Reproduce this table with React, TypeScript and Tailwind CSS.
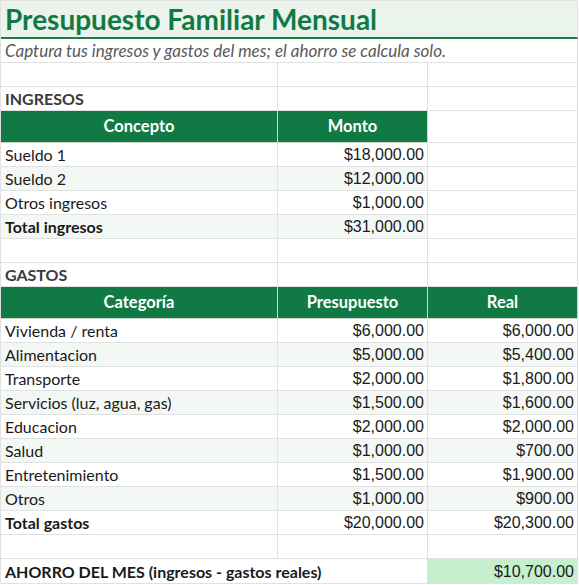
import React from 'react';

const ingresos = [
  { concepto: 'Sueldo 1', monto: '$18,000.00' },
  { concepto: 'Sueldo 2', monto: '$12,000.00' },
  { concepto: 'Otros ingresos', monto: '$1,000.00' },
];

const gastos = [
  { cat: 'Vivienda / renta', pres: '$6,000.00', real: '$6,000.00' },
  { cat: 'Alimentacion', pres: '$5,000.00', real: '$5,400.00' },
  { cat: 'Transporte', pres: '$2,000.00', real: '$1,800.00' },
  { cat: 'Servicios (luz, agua, gas)', pres: '$1,500.00', real: '$1,600.00' },
  { cat: 'Educacion', pres: '$2,000.00', real: '$2,000.00' },
  { cat: 'Salud', pres: '$1,000.00', real: '$700.00' },
  { cat: 'Entretenimiento', pres: '$1,500.00', real: '$1,900.00' },
  { cat: 'Otros', pres: '$1,000.00', real: '$900.00' },
];

const label = "font-['Lato','Noto_Sans',sans-serif] text-[16px] text-[#1a1a1a]";
const num = "font-['Liberation_Sans',Arial,sans-serif] text-[16px] text-[#1a1a1a] text-right";

const Cell = ({ className = '', children }: { className?: string; children?: React.ReactNode }) => (
  <div className={`h-6 flex items-center pl-1 pr-[3px] pt-px border-r border-b border-[#dfe1e3] whitespace-nowrap ${className}`}>
    {children}
  </div>
);

const HeadCell = ({ children }: { children?: React.ReactNode }) => (
  <div className="h-8 flex items-center justify-center bg-[#117a44] border-r border-b border-[#c8d6cc] font-['Lato','Noto_Sans',sans-serif] text-[16.5px] font-bold text-white">
    {children}
  </div>
);

export default function App() {
  return (
    <div className="w-[579px] h-[585px] bg-white overflow-hidden">
      <div className="w-[578px] border-t border-l border-[#dfe1e3]">
        {/* title */}
        <div className="h-[38px] flex items-center px-1 bg-[#eaf4ed] border-b-2 border-[#1f7a45] border-r border-r-[#dfe1e3]">
          <h1 className="font-['Lato','Noto_Sans',sans-serif] text-[28px] font-bold text-[#117a44] leading-none">
            Presupuesto Familiar Mensual
          </h1>
        </div>
        <div className="h-6 flex items-center px-1 border-r border-b border-[#dfe1e3]">
          <p className="font-['Lato','Noto_Sans',sans-serif] text-[17px] italic text-[#595959]">
            Captura tus ingresos y gastos del mes; el ahorro se calcula solo.
          </p>
        </div>

        <div className="grid grid-cols-[277px_150px_150px]">
          <Cell />
          <Cell />
          <Cell />

          <Cell className={`${label} font-bold text-[#3a3a3a]`}>INGRESOS</Cell>
          <Cell />
          <Cell />

          <HeadCell>Concepto</HeadCell>
          <HeadCell>Monto</HeadCell>
          <div className="h-8 border-r border-b border-[#dfe1e3]" />

          {ingresos.map((r, i) => (
            <React.Fragment key={r.concepto}>
              <Cell className={`${label} ${i % 2 ? 'bg-[#f3f8f4]' : ''}`}>{r.concepto}</Cell>
              <Cell className={`${num} justify-end ${i % 2 ? 'bg-[#f3f8f4]' : ''}`}>{r.monto}</Cell>
              <Cell />
            </React.Fragment>
          ))}
          <Cell className={`${label} font-bold bg-[#f3f8f4]`}>Total ingresos</Cell>
          <Cell className={`${num} justify-end bg-[#f3f8f4]`}>$31,000.00</Cell>
          <Cell />

          <Cell />
          <Cell />
          <Cell />

          <Cell className={`${label} font-bold text-[#3a3a3a]`}>GASTOS</Cell>
          <Cell />
          <Cell />

          <HeadCell>Categoría</HeadCell>
          <HeadCell>Presupuesto</HeadCell>
          <HeadCell>Real</HeadCell>

          {gastos.map((r, i) => {
            const bg = i % 2 ? 'bg-[#f3f8f4]' : '';
            return (
              <React.Fragment key={r.cat}>
                <Cell className={`${label} ${bg}`}>{r.cat}</Cell>
                <Cell className={`${num} justify-end ${bg}`}>{r.pres}</Cell>
                <Cell className={`${num} justify-end ${bg}`}>{r.real}</Cell>
              </React.Fragment>
            );
          })}
          <Cell className={`${label} font-bold`}>Total gastos</Cell>
          <Cell className={`${num} justify-end`}>$20,000.00</Cell>
          <Cell className={`${num} justify-end`}>$20,300.00</Cell>

          <Cell />
          <Cell />
          <Cell />

          <Cell className={`${label} font-bold col-span-2 h-[25px]`}>AHORRO DEL MES (ingresos - gastos reales)</Cell>
          <Cell className={`${num} justify-end bg-[#c6efce] h-[25px]`}>$10,700.00</Cell>
        </div>
      </div>
    </div>
  );
}
